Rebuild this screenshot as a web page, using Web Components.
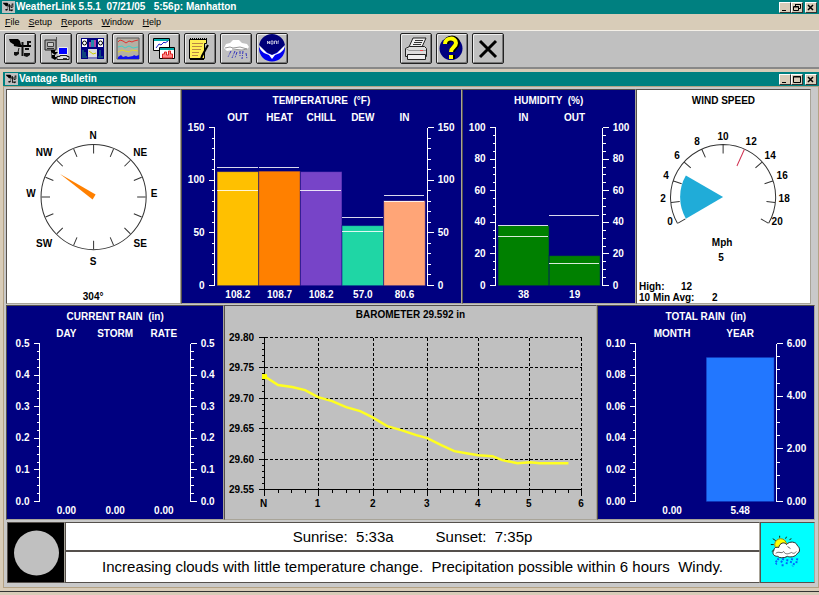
<!DOCTYPE html>
<html lang="en">
<head>
<meta charset="utf-8">
<title>WeatherLink 5.5.1</title>
<style>
html, body { margin: 0; }
body { background: #d8ccb8; font-family: "Liberation Sans", Arial, sans-serif; color: #000; }
</style>
</head>
<body>
<weather-app></weather-app>
<script>
const define = (name, html, setup) => customElements.define(name, class extends HTMLElement {
  constructor() {
    super();
    this.attachShadow({ mode: 'open' });
  }
  connectedCallback() {
    this.shadowRoot.innerHTML = typeof html === 'function' ? html(this) : html;
    if (setup) setup(this);
  }
});

/* ---------- icons ---------- */
const vane = `<path d="M5 6h9l2 2 1 4-5 1-6-4z" fill="#000"/><path d="M10 12l5 1h12" fill="none" stroke="#000" stroke-width="2"/><path d="M18.500 9v14M24 8v4M24 9h3M21 16h4" fill="none" stroke="#111" stroke-width="2"/><path d="M15 15l-1 4" stroke="#111"/><path d="M10 19h5v2l-3 2-2-1zM20 20h6v2l-3 2-3-1z" fill="#111"/>`;
const ICONS = {
  vane: ['0 0 32 31', vane],
  vaneSmall: ['3 3 27 24', vane],
  download: ['0 0 32 31', `<path d="M5 7h11v10H5z" fill="#aaa" stroke="#222"/><path d="M16.500 4v12M11.500 17v8h4" fill="none" stroke="#555"/><path d="M7.500 9.500h6v4h-6z" fill="#ccc" stroke="#444"/><path d="M7 15.500h7" stroke="#333"/><path d="M11 17h4v2h3l-3 3-4-3zM12 22h3v2h3l-3 3-3-2z" fill="#000"/><path d="M18.500 14.500h9v7h-9z" fill="#00f" stroke="#eee"/><path d="M20 22.500h7v1h2v3H17v-3h3z" fill="#ddd" stroke="#222"/><path d="M23 25.500h4" stroke="#333"/>`],
  bulletin: ['0 0 32 31', `<path d="M5 5h23v21H5z" fill="#000080"/><path d="M6 6h5v8H6zM22 6h5v8h-5z" fill="#fff"/><circle cx="8.500" cy="10" r="2" fill="none" stroke="#000"/><circle cx="24.500" cy="10" r="2" fill="none" stroke="#000"/><path d="M13 14V9h2v5zM18 14V7h2v7z" fill="#a4a"/><path d="M15 14V7h3v7z" fill="#28a"/><path d="M12 16h9v8h-9z" fill="#ddd"/><path d="M13 18l4 3 3-1" stroke="#cc0" fill="none"/><path d="M6 24h5M22 24h5M7 17v6M24 17v6M9 19v4" stroke="#1a8a7a"/><path d="M12 25h9" stroke="#fff"/>`],
  plot: ['0 0 32 31', `<path d="M5 5h22v21H5z" fill="#b4b0a4" stroke="#555"/><path d="M6 9l2-2 3 1 3 2 3-2 3 1 2-1 4-1" stroke="#e03030" fill="none"/><path d="M6 14l4-1 3 2 4-2 4 2 5-1" stroke="#40d0c8" fill="none"/><path d="M6 19l4-2 3 1 4 1 3-2 6 1" stroke="#e8d820" fill="none"/><path d="M6 26v-2l3-2 2 2 3-1 2 1 5-1 1-1 2 1 3-1v4z" fill="#11e"/>`],
  strip: ['0 0 32 31', `<path d="M5.500 5.500h16v12h-16z" fill="#fff" stroke="#000"/><path d="M6 7h15" stroke="#0aa" stroke-width="2"/><path d="M8 15l3-4 2 1 3-3 1 1 3-2" stroke="#22c" fill="none"/><path d="M11.500 14.500h15v11h-15z" fill="#fff" stroke="#000"/><path d="M12 16h14" stroke="#0aa" stroke-width="2"/><path d="M14.500 25v-4h2v-2h2v3h2v-4h2v3h2v4z" fill="#f88" stroke="#d22"/>`],
  notes: ['0 0 32 31', `<path d="M5.500 6.500h17v4h-2v15h-15z" fill="#ffef55" stroke="#000"/><path d="M6 6h17" stroke="#000" stroke-width="2" stroke-dasharray="1 1"/><path d="M8 10.500h11M8 13.500h10M8 16.500h9M8 19.500h7M8 22.500h6" stroke="#b84"/><path d="M24 12l-6 11-1 3" fill="none" stroke="#000" stroke-width="2"/><path d="M6 26.500h14" stroke="#000"/>`],
  rain: ['0 0 32 31', `<path d="M4 15l2-4 4-1 3-3h6l3 3 5 1 2 3-2 2-3 1H12l-5 1z" fill="#fff"/><path d="M5 15l5-1 3 1 7-1 7 2M12 16l10 1 5-1" fill="none" stroke="#999"/><path d="M11 18l-3 6M15 18l-3 7M17 19l-2 6M20 18l0 5M23 18l-1 8M26 20l1 6" stroke="#33b" stroke-dasharray="3 1 1 1"/>`],
  noaa: ['0 0 32 31', `<circle cx="16" cy="15.500" r="13" fill="#0000f0"/><path d="M3 14a13 13 0 0 1 26 0L16 22z" fill="#000078"/><path d="M3 12l8 8 5 2 5-2 8-8c0 3-2 6-5 8l-5 2-3 4-3-4-5-2c-3-2-5-5-5-8z" fill="#fff"/><path d="M11.500 11V8l2 3V8M15 8h2v3h-2zM18.500 11V8h2v3M22 11V8h1" stroke="#dde" fill="none" stroke-width=".8"/>`],
  printer: ['0 0 32 31', `<path d="M13 5h13l-4 9H9z" fill="#eee" stroke="#222"/><path d="M15 7.500h8M14 9.500h8M13 11.500h8" stroke="#333"/><path d="M5.500 15.500l4-2h15l2 2v8h-21z" fill="#ddd" stroke="#222"/><path d="M6 15.500l3 2h17" fill="none" stroke="#999"/><path d="M7.500 21.500v5h18v-5z" fill="#eee" stroke="#222"/><path d="M20 17.500h3" stroke="#e44"/>`],
  help: ['0 0 32 31', `<circle cx="15" cy="15.500" r="11.500" fill="#000080"/><path d="M10 11c0-7 11-7 11-1 0 4-5 4-5 9M16 22v4" fill="none" stroke="#000" stroke-width="6"/><path d="M9 11c0-7 11-7 11-1 0 4-5 4-5 9M15 22v4" fill="none" stroke="#ff0" stroke-width="4"/>`],
  exit: ['0 0 32 31', `<path d="M8 8l16 16M24 8L8 24" stroke="#000" stroke-width="3"/>`],
  min: ['0 0 10 9', `<path d="M2 7h4v1H2z"/>`],
  max: ['0 0 10 9', `<path d="M1.500 1.500h7v6h-7zM1.500 2h7" fill="none" stroke="#000"/>`],
  restore: ['0 0 10 9', `<path d="M3.500 3V1.500h5v4H7M1.500 3.500h5v4h-5zM3 1.500h6M2 4h5" fill="none" stroke="#000"/>`],
  close: ['0 0 10 9', `<path d="M2 2l5 5M7 2L2 7" stroke="#000" stroke-width="1.500"/>`],
  forecast: ['0 0 54 58', `<circle cx="20" cy="22" r="6" fill="#ff0" stroke="#a80"/><path d="M19 13v2M26 14l-1 2M12 16l3 2M10 22h3M11 29l3-2M29 17l2-1" stroke="#220"/><path d="M17 34c-4 0-6-3-4-6 0-3 3-4 5-3 1-5 6-6 8-3 3-4 10-3 11 1 3 2 3 7 0 8-2 4-8 4-10 3-4 2-8 2-10 0z" fill="#fff" stroke="#222"/><path d="M15 31c3-3 6 1 8-2 2 4 6 2 8 1 3 2 4 0 5-1M27 24l3 2" fill="none" stroke="#666"/><path d="M18 36l-3 4M23 36l-3 5M27 37l-1 5M32 36l-2 5M37 36l-1 5M16 41l-1 1M22 42v2M34 41l-2 3" stroke="#06f" stroke-width="2" stroke-dasharray="2 1"/>`],
  moon: ['0 0 56 59', `<circle cx="28.500" cy="30" r="22.500" fill="#c0c0c0"/>`]
};
define('wl-icon', el => {
  const [box, art] = ICONS[el.getAttribute('name')];
  return `<style>:host{display:block;white-space:normal}svg{display:block;width:100%;height:100%}</style><svg viewBox="${box}" aria-hidden="true">${art}</svg>`;
});

/* ---------- window chrome ---------- */
define('title-bar', el => `<style>
  :host { display: flex; align-items: center; height: 14px; background: #008080; color: #fff; padding: 0 2px; font: bold 10px/14px "Liberation Sans", sans-serif; }
  .logo { width: 13px; height: 12px; background: #c0c0c0; margin-right: 1px; }
  .text { flex: 1; white-space: pre; }
  button { box-sizing: border-box; width: 12px; height: 11px; padding: 0; border: 1px solid; border-color: #fff #333 #333 #fff; background: #d8ccb8; }
  button wl-icon { height: 9px; }
  button:last-child { margin-left: 2px; }
</style><wl-icon class="logo" name="vaneSmall"></wl-icon><span class="text"><slot></slot></span>
<button aria-label="Minimize"><wl-icon name="min"></wl-icon></button>
<button aria-label="Resize"><wl-icon name="${el.getAttribute('middle')}"></wl-icon></button>
<button aria-label="Close"><wl-icon name="close"></wl-icon></button>`);

define('menu-bar', `<style>
  :host { display: block; border-bottom: 1px solid #f4f0e8; }
  nav { display: flex; gap: 9px; padding: 0 5px; }
  button { border: 0; padding: 0; background: none; color: #000; font: 9px/16px "Liberation Sans", sans-serif; }
</style><nav><button><u>F</u>ile</button><button><u>S</u>etup</button><button><u>R</u>eports</button><button><u>W</u>indow</button><button><u>H</u>elp</button></nav>`);

define('tool-bar', () => {
  const b = ([n, l]) => `<button aria-label="${l}" title="${l}"><wl-icon name="${n}"></wl-icon></button>`;
  return `<style>
  :host { display: flex; gap: 112px; padding: 2px 4px 3px; background: #c0c0c0; border-bottom: 2px solid #888; }
  div { display: flex; gap: 4px; }
  button { width: 32px; height: 31px; padding: 0; background: #c0c0c0; border: 1px solid #222; border-radius: 2px; box-shadow: inset 1px 1px #eee, inset -1px -1px #777; }
  wl-icon { margin: -1px; height: 31px; }
</style><div>${[['vane', 'Station'], ['download', 'Download'], ['bulletin', 'Bulletin'], ['plot', 'Plot'], ['strip', 'Strip Charts'], ['notes', 'Summary'], ['rain', 'Rain'], ['noaa', 'NOAA']].map(b).join('')}</div>
<div>${[['printer', 'Print'], ['help', 'Help'], ['exit', 'Exit']].map(b).join('')}</div>`;
});

/* ---------- panels ---------- */
define('data-panel', `<style>
  :host { display: block; min-width: 0; border: 1px solid; border-color: #55504c #a8a498 #a8a498 #55504c; background: #000080; color: #fff; }
  :host([tone=white]) { background: #fff; color: #000; }
  :host([tone=gray]) { background: #c0c0c0; color: #000; }
  h2 { margin: 0; padding: 5px 0 3px; font: bold 10px/12px "Liberation Sans", sans-serif; text-align: center; white-space: pre; }
  :host([tone=gray]) h2 { padding: 3px 0; }
</style><h2><slot name="heading"></slot></h2><slot></slot>`);

const SVG_STYLE = `<style>:host{display:block}svg{display:block;width:100%;height:auto;overflow:visible}
text{font:bold 10px "Liberation Sans",sans-serif;fill:currentColor;white-space:pre}
.axis{stroke:currentColor;fill:none;shape-rendering:crispEdges}.m{text-anchor:middle}.e{text-anchor:end}</style>`;
const TOP = 17.5, SPAN = 158, BASE = TOP + SPAN;

function axis(x, side, labels, minor) {
  const n = labels.length - 1;
  let d = `M${x} ${TOP}V${BASE}`, t = '';
  for (let i = 0; i <= n * minor; i++) {
    const y = Math.floor(BASE - SPAN * i / (n * minor)) + 0.5;
    d += `M${x} ${y}h${side * (i % minor ? 3 : 6)}`;
  }
  labels.forEach((l, i) => {
    t += `<text class="${side < 0 ? 'e' : ''}" x="${x + side * 10}" y="${Math.round(BASE - SPAN * i / n) + 3}">${l}</text>`;
  });
  return `<path class="axis" d="${d}"/>${t}`;
}

/* Vertical bars between two scales. columns: [name, shown value, value, colour, marks] */
const CHARTS = {
  temperature: { w: 278, edge: 33, left: ['0', '50', '100', '150'], minor: 5, max: 150,
    columns: [['OUT', '108.2', 108.2, '#ffc000', [112, 90]], ['HEAT', '108.7', 108.7, '#ff8000', [112]], ['CHILL', '108.2', 108.2, '#7744c8', [90]], ['DEW', '57.0', 57, '#1fd6a5', [64.5, 51]], ['IN', '80.6', 80.6, '#ffa577', [85.3, 79.5]]] },
  humidity: { w: 172, edge: 33, left: ['0', '20', '40', '60', '80', '100'], minor: 4, max: 100,
    columns: [['IN', '38', 38, '#008000', [38, 31]], ['OUT', '19', 19, '#008000', [44, 14]]] },
  rain: { w: 216, edge: 33, left: ['0.0', '0.1', '0.2', '0.3', '0.4', '0.5'], minor: 4, max: 1,
    columns: [['DAY', '0.00', 0], ['STORM', '0.00', 0], ['RATE', '0.00', 0]] },
  total: { w: 216, edge: 38, left: ['0.00', '0.02', '0.04', '0.06', '0.08', '0.10'], right: ['0.00', '2.00', '4.00', '6.00'], minor: 4, max: 6,
    columns: [['MONTH', '0.00', 0], ['YEAR', '5.48', 5.48, '#2277ff']] }
};
define('bar-chart', el => {
  const c = CHARTS[el.getAttribute('kind')];
  const x0 = c.edge + 2, cw = (c.w - 2 * x0) / c.columns.length;
  const cols = c.columns.map(([name, shown, v, fill, marks = []], i) => {
    const x = x0 + cw * i, h = SPAN * v / c.max;
    return (v ? `<rect x="${x}" y="${BASE - h}" width="${cw}" height="${h}" fill="${fill}" stroke="#000080" stroke-opacity="0.500"/>` : '') +
      marks.map(m => `<path class="axis" d="M${x} ${Math.floor(BASE - SPAN * m / c.max) + 0.5}h${cw - 1}" opacity="0.850"/>`).join('') +
      `<text class="m" x="${x + cw / 2}" y="11">${name}</text><text class="m" x="${x + cw / 2}" y="188">${shown}</text>`;
  }).join('');
  return `${SVG_STYLE}<svg viewBox="0 0 ${c.w} 193">${cols}${axis(c.edge - 0.5, -1, c.left, c.minor)}${axis(c.w - c.edge + 0.5, 1, c.right || c.left, c.minor)}</svg>`;
});

const polar = (cx, cy, r, deg) => [cx + r * Math.sin(deg * Math.PI / 180), cy - r * Math.cos(deg * Math.PI / 180)].map(n => n.toFixed(1)).join(' ');
const label = ([t, x, y]) => `<text class="m" x="${x}" y="${y}">${t}</text>`;

define('wind-rose', () => {
  let ticks = '';
  for (let a = 0; a < 360; a += 22.5) ticks += `M${polar(86.5, 87, 52, a)}L${polar(86.5, 87, 43.5, a)}`;
  return `${SVG_STYLE}<svg viewBox="0 0 173 193"><circle cx="86.500" cy="87" r="52.500" fill="none" stroke="#333"/>
  <path d="${ticks}" stroke="#333"/><path d="M53 64L88.500 84.500 85.500 89.500z" fill="#ff8000"/>
  ${[['N', 86, 29], ['NE', 133, 46], ['E', 147, 87], ['SE', 133, 137], ['S', 86, 155], ['SW', 37, 137], ['W', 24, 87], ['NW', 37, 46], ['304°', 86, 190]].map(label).join('')}</svg>`;
});

define('wind-speed', () => {
  const cx = 86, cy = 87;
  let ticks = '';
  for (let v = 0; v <= 20; v += 2) if (v !== 12) ticks += `M${polar(cx, cy, 52, 240 + v * 12)}L${polar(cx, cy, 43.5, 240 + v * 12)}`;
  return `${SVG_STYLE}<svg viewBox="0 0 173 193">
  <path d="M${polar(cx, cy, 52.5, 240)}A52.500 52.500 0 1 1 ${polar(cx, cy, 52.5, 120)}${ticks}" fill="none" stroke="#333"/>
  <path d="M${cx} ${cy}L${polar(cx, cy, 43, 240)}A43 43 0 0 1 ${polar(cx, cy, 43, 300)}z" fill="#20acd8"/>
  <path d="M${polar(cx, cy, 52, 24)}L${polar(cx, cy, 34, 24)}" stroke="#d03050"/>
  ${[['0', 33, 115], ['2', 26, 92], ['4', 29, 69], ['6', 40, 49], ['8', 60, 35], ['10', 86, 30], ['12', 114, 35], ['14', 133, 49], ['16', 145, 69], ['18', 147, 92], ['20', 140, 115], ['Mph', 85, 136], ['5', 84, 151]].map(label).join('')}
  <text x="2" y="180">High:</text><text x="44" y="180">12</text><text x="2" y="191">10 Min Avg:</text><text x="75" y="191">2</text></svg>`;
});

define('barometer-chart', () => {
  const xs = [39, 93, 148, 202, 253, 304, 356].map(x => x + 0.5);
  const names = ['N', '1', '2', '3', '4', '5', '6'];
  const y = i => Math.round(13 + 30.4 * i) + 0.5;
  let grid = '', d = `M${xs[0]} ${y(0)}V${y(5)}H${xs[6]}`, t = '';
  for (let i = 0; i <= 5; i++) {
    if (i < 5) grid += `M${xs[0]} ${y(i)}H${xs[6]}`;
    d += `M${xs[0] - 6} ${y(i)}h6`;
    t += `<text class="e" x="29" y="${y(i) + 3}">${(29.8 - i * 0.05).toFixed(2)}</text>`;
    for (let k = 1; k < 5 && i < 5; k++) d += `M${xs[0] - 3} ${Math.floor(y(i) + 6.08 * k) + 0.5}h3`;
  }
  xs.forEach((x, i) => {
    if (i) grid += `M${x} ${y(0)}V${y(5)}`;
    d += `M${x} ${y(5)}v6`;
    t += `<text class="m" x="${x - 1}" y="183">${names[i]}</text>`;
    for (let k = 1; k < 4 && i < 6; k++) d += `M${Math.floor(x + (xs[i + 1] - x) * k / 4) + 0.5} ${y(5)}v3`;
  });
  return `${SVG_STYLE}<svg viewBox="0 0 370 195"><path class="axis" stroke-dasharray="3 2" d="${grid}"/><path class="axis" d="${d}"/>${t}
  <polyline points="39,52 53,61 67,63 80,66 93,73 107,77 121,83 135,87 147,93 162,102 176,106 191,111 202,114 216,121 229,127 241,129 253,131 267,132 277,136 292,139 305,138 314,139 343,139" fill="none" stroke="#ffff20" stroke-width="2.500"/>
  <rect x="37" y="50" width="5" height="5" fill="#ff0"/></svg>`;
});

define('bulletin-footer', `<style>
  :host { display: grid; grid-template-columns: 58px minmax(0, 1fr) 55px; margin: 2px 0 0 1px; font: 15px/28px "Liberation Sans", sans-serif; }
  .pic, p { border: 1px solid; border-color: #55504c #a8a498 #55504c #55504c; }
  .moon { background: #000; }
  .sky { background: #0ff; }
  p { margin: 0; background: #fff; text-align: center; white-space: pre; }
  .sun { display: flex; justify-content: center; gap: 42px; }
  .sun { line-height: 27px; }
  .forecast { line-height: 30px; }
</style><div class="pic moon"><wl-icon name="moon"></wl-icon></div>
<div><p class="sun"><span>Sunrise:  5:33a</span><span>Sunset:  7:35p</span></p>
<p class="forecast">Increasing clouds with little temperature change.  Precipitation possible within 6 hours  Windy.</p></div>
<div class="pic sky"><wl-icon name="forecast"></wl-icon></div>`);

define('weather-app', `<style>
  :host { display: block; border-bottom: 1px solid #333; }
  .child { padding: 3px 0 3px 3px; }
  .body { border: 1px solid #b4a284; background: #c9c9c9; padding: 2px 3px 4px 2px; }
  .row { display: grid; }
  .one { grid-template-columns: 175fr 280fr 174fr 175fr; margin: 0 4px 1px 0; }
  .two { grid-template-columns: 218fr 372fr 218fr; }
</style>
<title-bar middle="restore">WeatherLink 5.5.1  07/21/05   5:56p: Manhatton</title-bar>
<menu-bar></menu-bar><tool-bar></tool-bar>
<section class="child"><title-bar middle="max">Vantage Bulletin</title-bar>
<div class="body">
  <div class="row one">
    <data-panel tone="white"><span slot="heading">WIND DIRECTION</span><wind-rose></wind-rose></data-panel>
    <data-panel><span slot="heading">TEMPERATURE  (°F)</span><bar-chart kind="temperature"></bar-chart></data-panel>
    <data-panel><span slot="heading">HUMIDITY  (%)</span><bar-chart kind="humidity"></bar-chart></data-panel>
    <data-panel tone="white"><span slot="heading">WIND SPEED</span><wind-speed></wind-speed></data-panel>
  </div>
  <div class="row two">
    <data-panel><span slot="heading">CURRENT RAIN  (in)</span><bar-chart kind="rain"></bar-chart></data-panel>
    <data-panel tone="gray"><span slot="heading">BAROMETER 29.592 in</span><barometer-chart></barometer-chart></data-panel>
    <data-panel><span slot="heading">TOTAL RAIN  (in)</span><bar-chart kind="total"></bar-chart></data-panel>
  </div>
  <bulletin-footer></bulletin-footer>
</div></section>`);
</script>
</body>
</html>
